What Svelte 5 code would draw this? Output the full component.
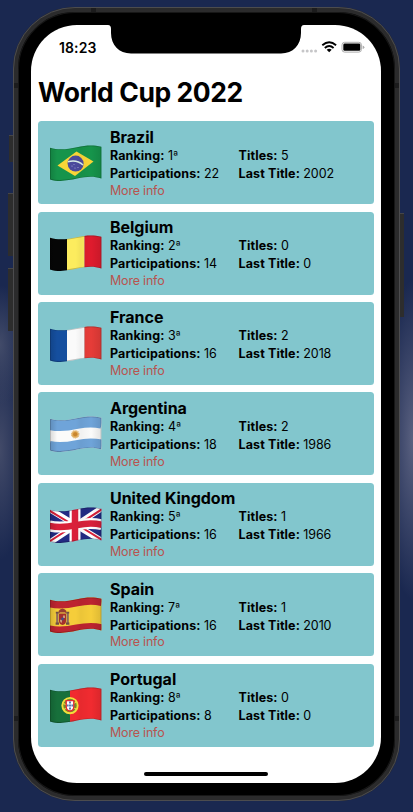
<script>
  const teams = [
    { name: 'Brazil', flag: 'br', ranking: 1, titles: 5, participations: 22, last: 2002 },
    { name: 'Belgium', flag: 'be', ranking: 2, titles: 0, participations: 14, last: 0 },
    { name: 'France', flag: 'fr', ranking: 3, titles: 2, participations: 16, last: 2018 },
    { name: 'Argentina', flag: 'ar', ranking: 4, titles: 2, participations: 18, last: 1986 },
    { name: 'United Kingdom', flag: 'uk', ranking: 5, titles: 1, participations: 16, last: 1966 },
    { name: 'Spain', flag: 'es', ranking: 7, titles: 1, participations: 16, last: 2010 },
    { name: 'Portugal', flag: 'pt', ranking: 8, titles: 0, participations: 8, last: 0 }
  ];
  const cloth = 'M0 2.8C9 5.6 18 4.2 27 2.2S43-.4 51.4 1.8V33.4C43 30.8 36 31.6 27 33.6S9 37.2 0 34.4Z';
  const wave = (y) => `M-1 ${y + 0.4}C9 ${y + 3} 18 ${y + 1.6} 27 ${y - 0.4}S43 ${y - 3} 52 ${y - 0.6}`;
</script>

<div class="desktop">
  <i class="key mute"></i>
  <i class="key up"></i>
  <i class="key down"></i>
  <i class="key power"></i>
  <div class="phone">
    <div class="screen">
      <svg class="notch" width="196" height="29" viewBox="0 0 196 29">
        <path d="M0 0Q3 0 3 4V8C3 20 11 28.5 23 28.5H173C185 28.5 193 20 193 8V4Q193 0 196 0Z" />
      </svg>
      <header class="status">
        <span class="time">18:23</span>
        <svg width="64" height="14" viewBox="0 0 64 14">
          <g fill="#c6c6c8">
            <circle cx="2" cy="10" r="1.5" /><circle cx="6.2" cy="10" r="1.5" />
            <circle cx="10.4" cy="10" r="1.5" /><circle cx="14.6" cy="10" r="1.5" />
          </g>
          <g fill="none" stroke="#000" stroke-width="1.9">
            <path d="M21.3 4.2Q28.2-1.6 35.1 4.2" /><path d="M23.8 7Q28.2 3.2 32.6 7" />
          </g>
          <path d="M25.7 8.8Q28.2 6.8 30.7 8.8L28.2 11.2Z" />
          <rect x="41" y="1.3" width="19.4" height="9.8" rx="2.6" fill="none" stroke="#acacac" />
          <rect x="42.3" y="2.6" width="17" height="7.2" rx="1.3" />
          <path d="M61.6 4.4Q63.4 4.8 63.4 6.2T61.6 8Z" fill="#acacac" />
        </svg>
      </header>
      <h1>World Cup 2022</h1>
      <main>
        {#each teams as t}
          <article>
            <svg class="flag" width="52" height="38" viewBox="0 0 52 38">
              <defs>
                <clipPath id="clip-{t.flag}"><path d={cloth} /></clipPath>
                <linearGradient id="shade-{t.flag}">
                  <stop offset="0" stop-opacity=".14" />
                  <stop offset=".14" stop-opacity="0" />
                  <stop offset=".5" stop-opacity="0" />
                  <stop offset=".6" stop-opacity=".04" />
                  <stop offset=".8" stop-opacity="0" />
                  <stop offset="1" stop-opacity=".1" />
                </linearGradient>
              </defs>
              <g clip-path="url(#clip-{t.flag})">
                {#if t.flag === 'br'}
                  <path fill="#16944b" d="M0-1H52V38H0z" />
                  <path fill="#f9d537" d="M7.5 20.5L26.5 6.5 43.5 16.5 25 31Z" />
                  <circle cx="25.6" cy="18.6" r="8" fill="#4b4a9c" />
                  <path d="M18 16.7Q27 14.3 33 20" fill="none" stroke="#d9efe6" stroke-width="1.5" />
                  <g fill="#aaa8dc"><circle cx="22" cy="21" r=".6" /><circle cx="25" cy="23" r=".6" /><circle cx="28" cy="22.5" r=".6" /><circle cx="24" cy="19.6" r=".5" /></g>
                {:else if t.flag === 'be'}
                  <path fill="#060606" d="M0-1H17V38H0z" />
                  <path fill="#fcec5e" d="M17-1H34.5V38H17z" />
                  <path fill="#df1b2d" d="M34.5-1H52V38H34.5z" />
                {:else if t.flag === 'fr'}
                  <path fill="#154f9f" d="M0-1H17V38H0z" />
                  <path fill="#fafafa" d="M17-1H34.5V38H17z" />
                  <path fill="#e63c38" d="M34.5-1H52V38H34.5z" />
                {:else if t.flag === 'ar'}
                  <path fill="#fbfbfa" d="M0-1H52V38H0z" />
                  <g fill="none" stroke="#6fa4d9" stroke-width="12"><path d={wave(7.4)} /><path d={wave(30.4)} /></g>
                  <circle cx="25.2" cy="18.3" r="3.4" fill="#dba34b" stroke="#e5b976" stroke-width="1.8" stroke-dasharray="1 .5" />
                  <circle cx="25.2" cy="18.3" r="2" fill="#c9852e" />
                {:else if t.flag === 'uk'}
                  <path fill="#232b84" d="M0-1H52V38H0z" />
                  <g fill="none" stroke="#fff" stroke-width="6"><path d="M-1 2L52 34M-1 36L52 1" /></g>
                  <g fill="none" stroke="#d9203a" stroke-width="2"><path d="M-1 3.4L25 19M26 17L52 32.8M-1 34.8L25 18M26 19L52 2.2" /></g>
                  <path d={wave(18.4)} fill="none" stroke="#fff" stroke-width="11" />
                  <path d="M25-1V38" stroke="#fff" stroke-width="11" />
                  <path d={wave(18.4)} fill="none" stroke="#d9203a" stroke-width="6.5" />
                  <path d="M25-1V38" stroke="#d9203a" stroke-width="6.5" />
                {:else if t.flag === 'es'}
                  <path fill="#f5cd3a" d="M0-1H52V38H0z" />
                  <g fill="none" stroke="#bd2430" stroke-width="9"><path d={wave(5.2)} /><path d={wave(32.4)} /></g>
                  <path fill="#8d6a5c" d="M6.2 16H8.4V26H6.2zM16.6 16H18.8V26H16.6z" />
                  <path fill="#6f4e45" d="M5.6 25.4H9V27.8H5.6zM16 25.4H19.4V27.8H16zM5.8 14.8H8.8V16.6H5.8zM16.2 14.8H19.2V16.6H16.2z" />
                  <path fill="#a52f2c" d="M9 17H16V24Q16 27.5 12.5 28 9 27.5 9 24z" />
                  <path fill="#cf9a78" d="M13 18.4H15V21H13zM10 22.8H12V25.8Q10 25.6 10 24z" />
                  <circle cx="12.5" cy="22" r="1.4" fill="#454d86" />
                  <path fill="#963d30" d="M9.1 16.4L8.6 14Q9.6 12.2 12.5 11.4 15.4 12.2 16.4 14L15.9 16.4z" />
                  <path fill="#dfa842" d="M9.6 15.2H15.4V15.9H9.6z" />
                {:else}
                  <path fill="#17703b" d="M0-1H20V38H0z" />
                  <path fill="#f12b30" d="M20-1H52V38H20z" />
                  <circle cx="20" cy="18.6" r="7.7" fill="#6f8d2c" stroke="#f3df3b" stroke-width="1.9" />
                  <path d="M13.4 16.5L26 22M14 22.5L26 15" stroke="#f3df3b" stroke-width="1.1" />
                  <path fill="#fff" stroke="#e22d32" stroke-width="1.4" d="M16.2 13.6H23.8V19.6Q23.8 23.7 20 24 16.2 23.7 16.2 19.6z" />
                  <path fill="#33559c" d="M19.2 14.6H20.8V16.6H19.2zM19.2 17.6H20.8V19.6H19.2zM19.2 20.6H20.8V22.6H19.2zM17.2 17.6H18.5V19.6H17.2zM21.5 17.6H22.8V19.6H21.5z" />
                {/if}
                <path d={cloth} fill="url(#shade-{t.flag})" />
                <path d={cloth} fill="none" stroke="#000" stroke-opacity=".22" stroke-width="1.5" />
              </g>
            </svg>
            <div class="info">
              <h2>{t.name}</h2>
              <div class="facts">
                <p><b>Ranking:</b> {t.ranking}<span>ª</span></p>
                <p><b>Titles:</b> {t.titles}</p>
                <p><b>Participations:</b> {t.participations}</p>
                <p><b>Last Title:</b> {t.last}</p>
              </div>
              <a href="#more">More info</a>
            </div>
          </article>
        {/each}
      </main>
      <i class="home"></i>
    </div>
    <i class="band top-left"></i>
    <i class="band top-right"></i>
    <i class="band left-high"></i>
    <i class="band right-high"></i>
    <i class="band left-low"></i>
    <i class="band right-low"></i>
  </div>
</div>

<style>
  :global(body) { margin: 0; }
  .desktop {
    position: relative;
    box-sizing: border-box;
    width: 413px;
    height: 812px;
    padding: 7px 13px 11px;
    overflow: hidden;
    font-family: Inter, 'Liberation Sans', sans-serif;
    background:
      radial-gradient(ellipse 26px 60px at 0 345px, #424b69, transparent),
      radial-gradient(ellipse 26px 110px at 0 450px, #424a68, transparent),
      radial-gradient(ellipse 30px 160px at 413px 440px, #5a6180, transparent),
      #1a2850;
  }
  .phone {
    position: relative;
    box-sizing: border-box;
    width: 387px;
    height: 794px;
    padding: 13px;
    border: 5px solid #2b2b2c;
    border-radius: 62px;
    background: #000;
    box-shadow: inset 0 0 0 1px #171717;
  }
  .phone::before {
    content: '';
    position: absolute;
    inset: -5px;
    border: 1.5px solid #4c4c4e;
    border-radius: 62px;
  }
  .band { position: absolute; background: #1c1c1d; }
  .top-left { left: 73px; top: -4px; width: 5px; height: 4px; }
  .top-right { right: 78px; top: -4px; width: 5px; height: 4px; }
  .left-high { left: -4px; top: 71px; width: 4px; height: 5px; }
  .right-high { right: -4px; top: 71px; width: 4px; height: 5px; }
  .left-low { left: -4px; bottom: 75px; width: 4px; height: 5px; }
  .right-low { right: -4px; bottom: 75px; width: 4px; height: 5px; }
  .screen {
    position: relative;
    box-sizing: border-box;
    height: 758px;
    width: 350px;
    padding: 0 7px;
    border-radius: 46px;
    background: #fff;
    overflow: hidden;
  }
  .key { position: absolute; width: 5px; background: #2d2d2d; border-top: 1px solid #454548; box-sizing: border-box; }
  .mute { left: 8.5px; top: 135px; height: 27px; }
  .up { left: 8px; top: 193px; height: 63px; }
  .down { left: 8px; top: 268px; height: 63px; }
  .power { left: 400px; top: 213px; width: 4px; height: 104px; }
  .notch { position: absolute; left: 77px; top: 0; }
  .status { display: flex; justify-content: space-between; align-items: center; height: 45px; padding: 0 9px 0 21px; }
  .time { font-size: 14px; font-weight: 600; letter-spacing: 0.1px; }
  h1 { margin: 3.3px 0 0; font-size: 26.5px; line-height: 38px; font-weight: 700; letter-spacing: -0.43px; white-space: nowrap; }
  main { display: flex; flex-direction: column; gap: 7.4px; margin-top: 10px; }
  article {
    display: flex;
    box-sizing: border-box;
    width: 336px;
    height: 83px;
    padding: 5.4px 0 0 12px;
    border-radius: 3.5px;
    background: #82c6cd;
  }
  .flag { flex: none; margin: 18.4px 8px 0 0; }
  h2 { margin: 0; font-size: 16px; line-height: 20px; font-weight: 650; letter-spacing: -0.03px; }
  .facts { display: grid; grid-template-columns: 128.6px 120px; }
  p { margin: 0; font-size: 12.5px; line-height: 17.9px; letter-spacing: -0.1px; white-space: nowrap; }
  p span { font-weight: 300; }
  b { font-weight: 660; letter-spacing: 0.1px; }
  a { display: block; font-size: 12.5px; line-height: 15.2px; letter-spacing: -0.2px; color: #b85450; text-decoration: none; }
  .home { position: absolute; left: 113px; bottom: 7px; width: 124px; height: 4.5px; border-radius: 3px; background: #000; }
</style>
